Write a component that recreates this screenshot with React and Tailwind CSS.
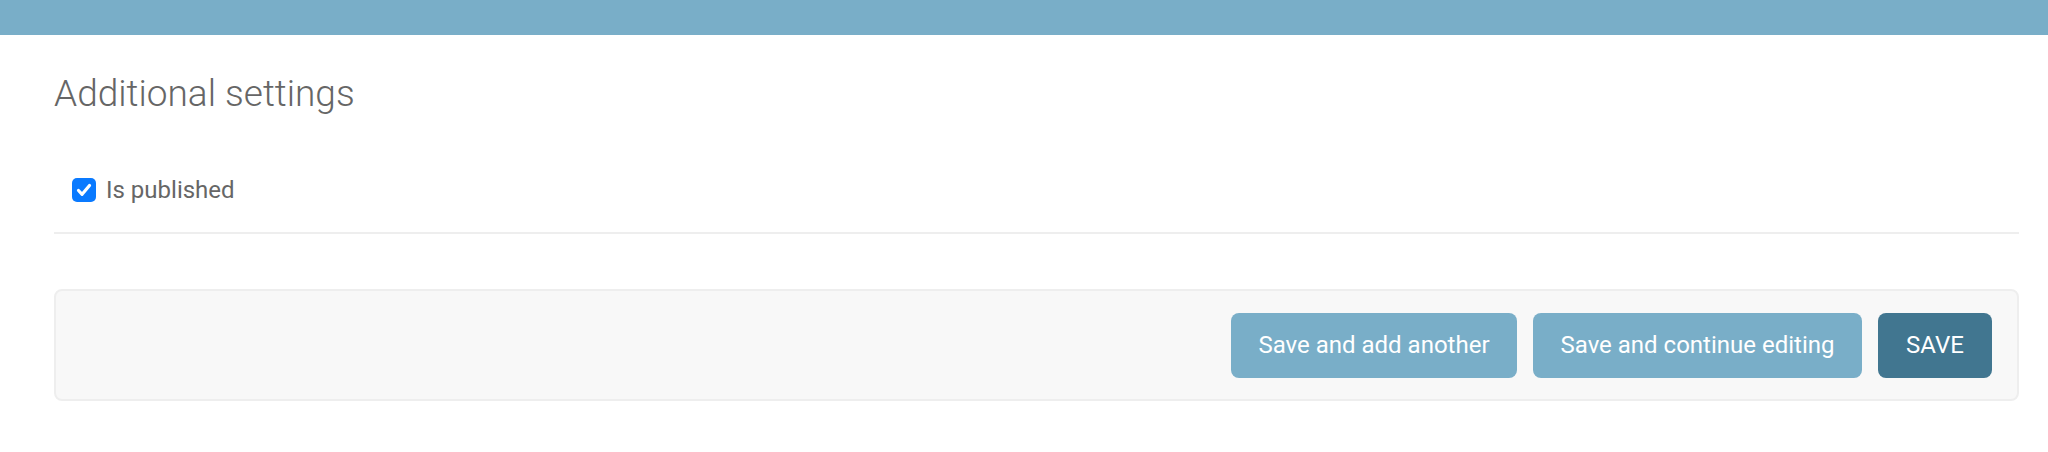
export default function App() {
  return (
    <div className="min-h-[452px] bg-white font-['Roboto',sans-serif]">
      <div className="h-[35px] bg-[#79aec8]" />
      <div className="pl-[54px] pr-[29px]">
        <h2 className="mt-[35px] text-[37px] leading-[48px] font-light text-[#666]">Additional settings</h2>

        <div className="mt-[60px] flex h-[24px] items-center pl-[18px]">
          <span className="flex h-[24px] w-[24px] items-center justify-center rounded-[5px] bg-[#0a7aff]">
            <svg width="20" height="20" viewBox="0 0 20 20" fill="none">
              <path d="M4.5 10.5l3.6 3.8L15.5 5.5" stroke="white" strokeWidth="3.2" strokeLinecap="round" strokeLinejoin="round" />
            </svg>
          </span>
          <label className="ml-[10px] text-[24px] leading-[24px] text-[#666]">Is published</label>
        </div>

        <div className="mt-[30px] h-[2px] bg-[#eee]" />

        <div className="mt-[55px] flex h-[112px] items-center justify-end gap-[16px] rounded-[8px] border-2 border-[#eee] bg-[#f8f8f8] pr-[25px]">
          <button className="h-[65px] w-[286px] rounded-[8px] bg-[#79aec8] text-[24px] text-white">Save and add another</button>
          <button className="h-[65px] w-[329px] rounded-[8px] bg-[#79aec8] text-[24px] text-white">Save and continue editing</button>
          <button className="h-[65px] w-[114px] rounded-[8px] bg-[#417690] text-[24px] text-white">SAVE</button>
        </div>
      </div>
    </div>
  );
}
